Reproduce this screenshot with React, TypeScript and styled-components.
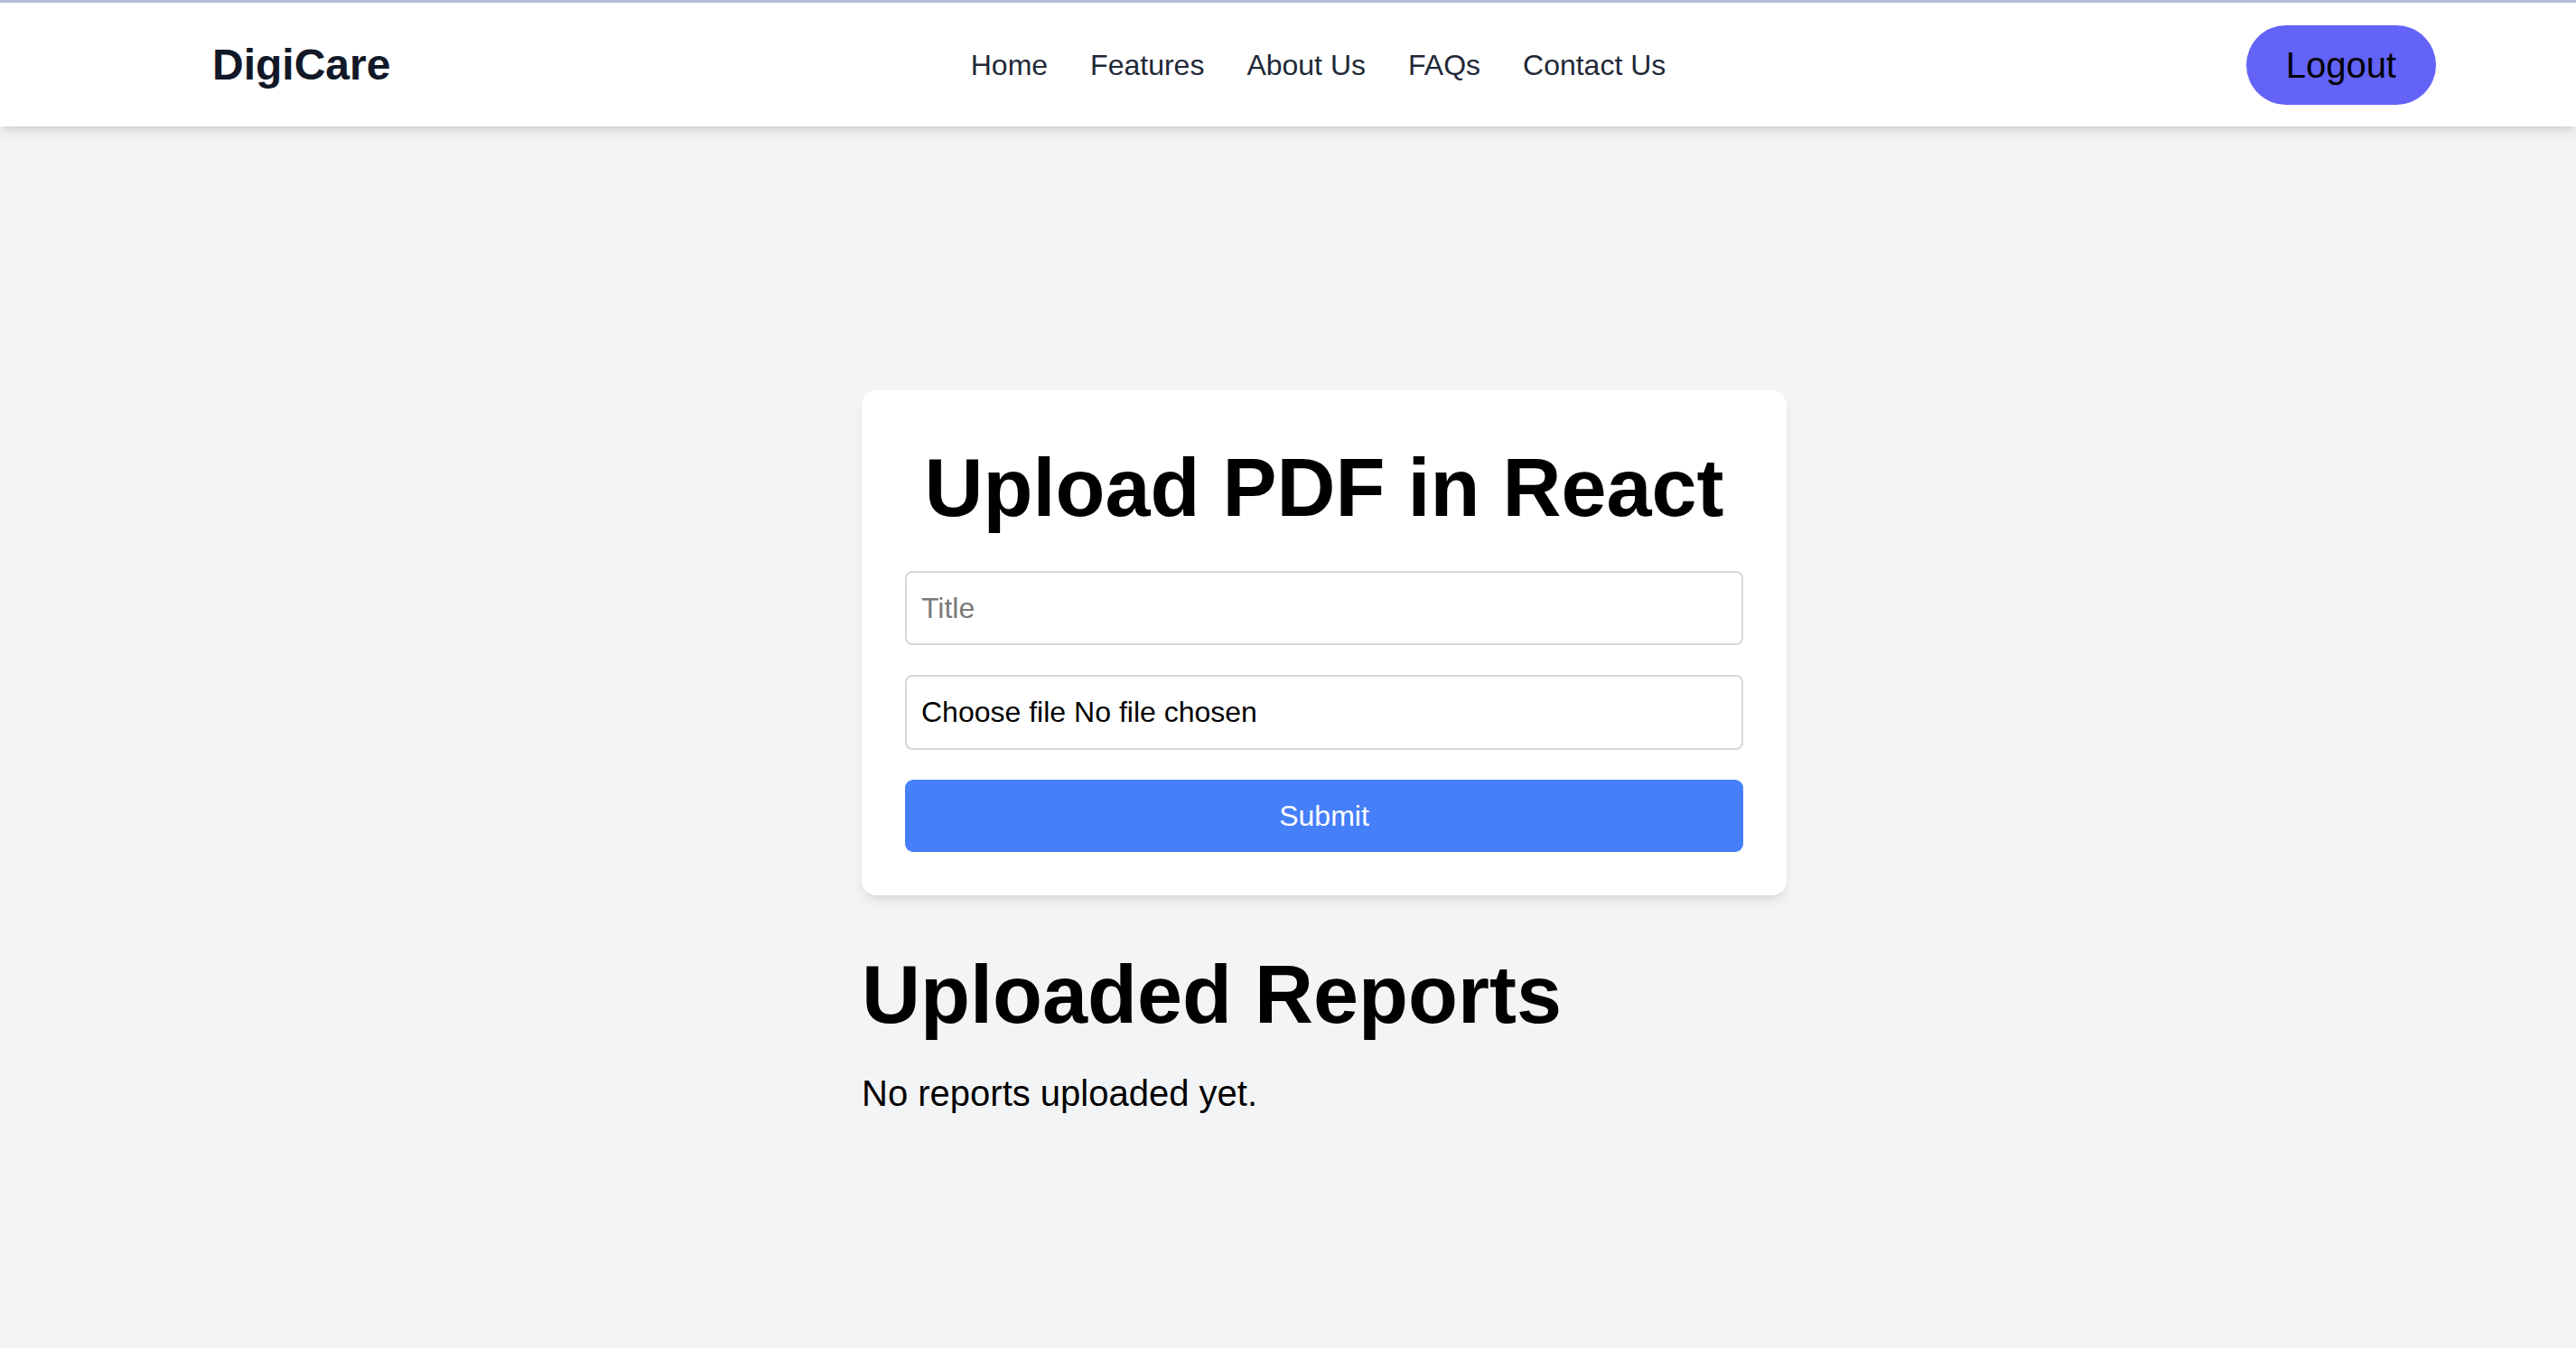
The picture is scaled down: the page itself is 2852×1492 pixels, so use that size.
import React from "react";
import styled, { createGlobalStyle } from "styled-components";

const GlobalStyle = createGlobalStyle`
  * { box-sizing: border-box; }
  html, body { margin: 0; padding: 0; }
  body {
    background: #f3f4f6;
    font-family: "Liberation Sans", Arial, Helvetica, sans-serif;
    color: #000;
    min-height: 1492px;
  }
`;

const Page = styled.div`
  min-height: 1492px;
  background: #f3f4f6;
  border-top: 3px solid #afbcd9;
`;

const Header = styled.header`
  background: #ffffff;
  height: 137px;
  box-shadow: 0 8px 12px -2px rgba(0, 0, 0, 0.1), 0 4px 6px -4px rgba(0, 0, 0, 0.1);
  position: relative;
  z-index: 1;
`;

const Bar = styled.div`
  height: 100%;
  padding: 0 155px 0 235px;
  display: flex;
  align-items: center;
  justify-content: space-between;
`;

const Logo = styled.div`
  font-size: 48px;
  font-weight: 700;
  color: #111827;
  line-height: 64px;
`;

const Nav = styled.nav`
  display: flex;
  align-items: center;
  gap: 47px;
`;

const NavLink = styled.a`
  font-size: 32px;
  color: #1f2937;
  text-decoration: none;
  line-height: 48px;
`;

const LogoutButton = styled.button`
  height: 88px;
  padding: 0 44px;
  border: none;
  border-radius: 9999px;
  background: #6363f8;
  color: #000;
  font-family: "Liberation Sans", Arial, sans-serif;
  font-size: 40px;
  line-height: 56px;
  cursor: pointer;
`;

const Main = styled.main`
  padding: 292px 155px 0 235px;
  display: flex;
  flex-direction: column;
  align-items: center;
`;

const Column = styled.div`
  width: 1024px;
  display: flex;
  flex-direction: column;
`;

const Card = styled.form`
  background: #ffffff;
  border-radius: 16px;
  padding: 48px;
  box-shadow: 0 8px 14px -3px rgba(0, 0, 0, 0.1), 0 4px 6px -4px rgba(0, 0, 0, 0.08);
  display: flex;
  flex-direction: column;
  gap: 33px;
`;

const Title = styled.h1`
  margin: 0 0 -1px;
  font-size: 90px;
  line-height: 120px;
  font-weight: 700;
  text-align: center;
  color: #000;
`;

const TextInput = styled.input`
  height: 82px;
  width: 100%;
  border: 2px solid #d4d7dd;
  border-radius: 8px;
  padding: 0 16px;
  font-family: "Liberation Sans", Arial, sans-serif;
  font-size: 32px;
  color: #000;
  background: #fff;
  outline: none;
  &::placeholder { color: #7a7a7a; }
`;

const FileBox = styled.label`
  height: 83px;
  width: 100%;
  border: 2px solid #d4d7dd;
  border-radius: 8px;
  padding: 0 16px;
  display: flex;
  align-items: center;
  gap: 9px;
  font-size: 32px;
  color: #000;
  background: #fff;
  cursor: pointer;
`;

const HiddenFile = styled.input`
  display: none;
`;

const SubmitButton = styled.button`
  height: 80px;
  width: 100%;
  border: none;
  border-radius: 9px;
  background: #457ff9;
  color: #ffffff;
  font-family: "Liberation Sans", Arial, sans-serif;
  font-size: 32px;
  cursor: pointer;
`;

const SectionTitle = styled.h2`
  margin: 50px 0 0;
  font-size: 90px;
  line-height: 120px;
  font-weight: 700;
  color: #000;
`;

const Empty = styled.p`
  margin: 21px 0 0;
  font-size: 40px;
  line-height: 56px;
  color: #000;
`;

export default function App() {
  const links = ["Home", "Features", "About Us", "FAQs", "Contact Us"];
  return (
    <Page>
      <GlobalStyle />
      <Header>
        <Bar>
          <Logo>DigiCare</Logo>
          <Nav>
            {links.map((l) => (
              <NavLink key={l} href="#">
                {l}
              </NavLink>
            ))}
          </Nav>
          <LogoutButton type="button">Logout</LogoutButton>
        </Bar>
      </Header>
      <Main>
        <Column>
          <Card onSubmit={(e) => e.preventDefault()}>
            <Title>Upload PDF in React</Title>
            <TextInput type="text" placeholder="Title" />
            <FileBox>
              <HiddenFile type="file" accept="application/pdf" />
              <span>Choose file</span>
              <span>No file chosen</span>
            </FileBox>
            <SubmitButton type="submit">Submit</SubmitButton>
          </Card>
          <SectionTitle>Uploaded Reports</SectionTitle>
          <Empty>No reports uploaded yet.</Empty>
        </Column>
      </Main>
    </Page>
  );
}
